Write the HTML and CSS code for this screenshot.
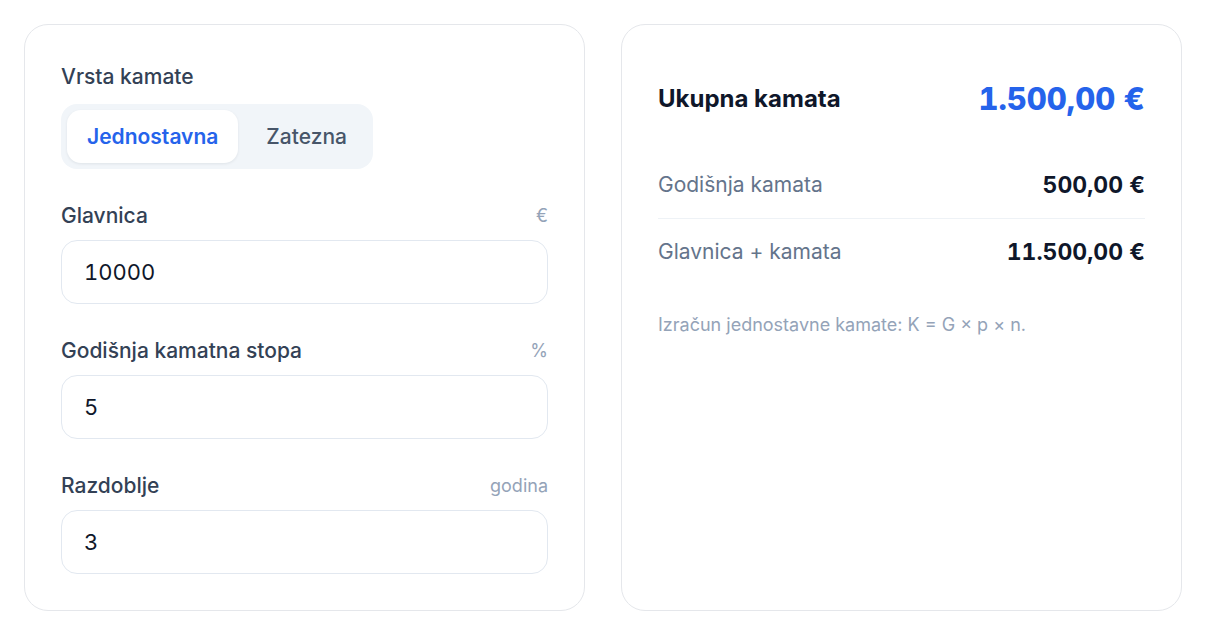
FILE: index.html
```html
<!DOCTYPE html>
<html lang="hr">
<head>
<meta charset="utf-8">
<title>Kalkulator kamata</title>
<link rel="stylesheet" href="styles.css">
</head>
<body>
<main class="layout">
  <section class="card form-card">
    <div class="group">
      <div class="label-row"><span class="label">Vrsta kamate</span></div>
      <div class="segmented">
        <button class="seg seg-active">Jednostavna</button>
        <button class="seg">Zatezna</button>
      </div>
    </div>
    <div class="field">
      <div class="label-row"><span class="label">Glavnica</span><span class="unit">€</span></div>
      <input class="input" type="text" value="10000">
    </div>
    <div class="field">
      <div class="label-row"><span class="label">Godišnja kamatna stopa</span><span class="unit">%</span></div>
      <input class="input" type="text" value="5">
    </div>
    <div class="field">
      <div class="label-row"><span class="label">Razdoblje</span><span class="unit">godina</span></div>
      <input class="input" type="text" value="3">
    </div>
  </section>
  <section class="card result-card">
    <div class="total">
      <span class="total-label">Ukupna kamata</span>
      <span class="total-value">1.500,00 €</span>
    </div>
    <div class="rows">
      <div class="row row-divided">
        <span class="row-label">Godišnja kamata</span>
        <span class="row-value">500,00 €</span>
      </div>
      <div class="row">
        <span class="row-label">Glavnica + kamata</span>
        <span class="row-value">11.500,00 €</span>
      </div>
    </div>
    <p class="note">Izračun jednostavne kamate: K = G × p × n.</p>
  </section>
</main>
</body>
</html>
```

FILE: styles.css
```css
* { box-sizing: border-box; }
html, body { margin: 0; padding: 0; background: #ffffff; }
body {
  font-family: Inter, "Noto Sans", "Liberation Sans", sans-serif;
  color: #0f172a;
  padding: 24px;
}
.layout {
  display: grid;
  grid-template-columns: 1fr 1fr;
  gap: 36px;
}
.card {
  background: #ffffff;
  border: 1px solid #e5e7eb;
  border-radius: 24px;
  padding: 36px;
}
.form-card {
  display: flex;
  flex-direction: column;
  gap: 31px;
}
.group, .field {
  display: flex;
  flex-direction: column;
  gap: 10px;
}
.group { gap: 13px; }
.label-row {
  display: flex;
  justify-content: space-between;
  align-items: center;
  height: 30px;
}
.label {
  font-size: 21px;
  font-weight: 500;
  color: #334155;
}
.unit {
  font-size: 18px;
  color: #94a3b8;
}
.segmented {
  align-self: flex-start;
  display: flex;
  gap: 8px;
  padding: 6px;
  background: #f1f5f9;
  border-radius: 16px;
}
.seg {
  font-family: inherit;
  font-size: 21px;
  font-weight: 500;
  color: #475569;
  background: transparent;
  border: none;
  border-radius: 14px;
  height: 53px;
  padding: 0 20px;
  cursor: pointer;
}
.seg-active {
  background: #ffffff;
  color: #2563eb;
  font-weight: 600;
  box-shadow: 0 1px 3px rgba(15, 23, 42, 0.08);
}
.input {
  font-family: inherit;
  font-size: 22px;
  font-variant-numeric: tabular-nums;
  color: #0f172a;
  height: 64px;
  width: 100%;
  padding: 0 22px;
  border: 1px solid #e2e8f0;
  border-radius: 16px;
  background: #ffffff;
  outline: none;
}
.total {
  display: flex;
  justify-content: space-between;
  align-items: center;
  padding: 20px 0;
  line-height: 36px;
}
.total-label {
  font-size: 24px;
  font-weight: 700;
  color: #0f172a;
}
.total-value {
  font-size: 31px;
  font-weight: 800;
  font-variant-numeric: tabular-nums;
  color: #2563eb;
}
.rows { margin-top: 15px; }
.row {
  display: flex;
  justify-content: space-between;
  align-items: center;
  padding: 20px 0;
  line-height: 26px;
}
.row-divided { border-bottom: 1px solid #eef2f6; }
.row-label {
  font-size: 21px;
  color: #64748b;
}
.row-value {
  font-size: 23px;
  font-weight: 700;
  font-variant-numeric: tabular-nums;
  color: #0f172a;
}
.note {
  margin: 28px 0 0;
  font-size: 18px;
  line-height: 24px;
  color: #94a3b8;
}
```
